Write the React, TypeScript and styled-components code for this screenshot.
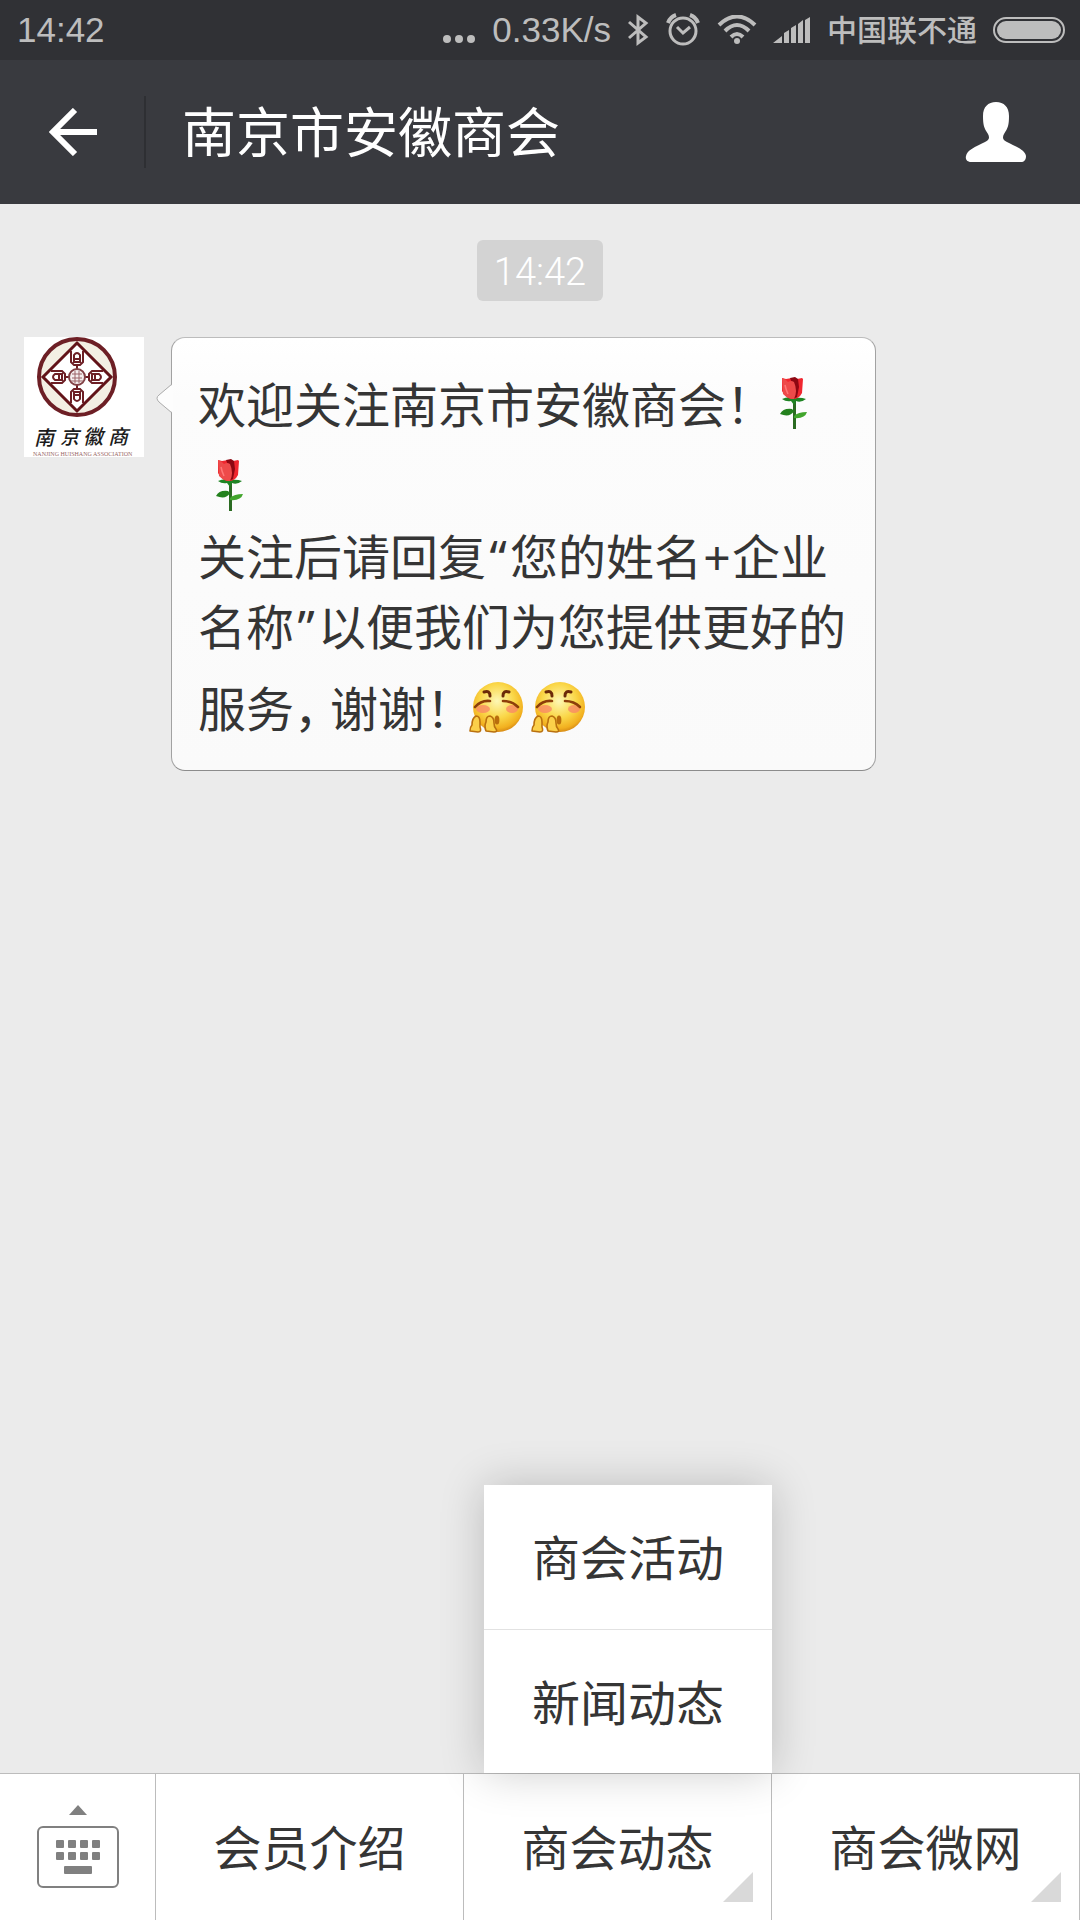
import React from "react";
import styled, { createGlobalStyle } from "styled-components";

const cjk = `"Noto Sans CJK SC", sans-serif`;

const GlobalStyle = createGlobalStyle`
  *, *::before, *::after { box-sizing: border-box; }
  body {
    margin: 0;
    background: #ebebeb;
    color: #353535;
    font-family: ${cjk};
  }
  button { font: inherit; color: inherit; background: none; border: 0; padding: 0; cursor: pointer; }
  svg { display: block; flex: none; }
`;

const Page = styled.div`
  min-height: 100vh;
  display: flex;
  flex-direction: column;
`;

const StatusBar = styled.div`
  height: 60px;
  padding: 0 15px 0 17px;
  display: flex;
  align-items: center;
  justify-content: space-between;
  background: #303135;
  color: #bdbdbd;
  font-family: "Liberation Sans", ${cjk};
  font-size: 35px;
  line-height: 60px;
`;

const StatusItems = styled.div`
  display: flex;
  align-items: center;
  gap: 16px;
`;

const MoreDots = styled.svg`
  margin-top: 18px;
`;

const Carrier = styled.span`
  padding-bottom: 4px;
  font-family: ${cjk};
  font-size: 30px;
  font-weight: 500;
  line-height: 56px;
`;

const Header = styled.header`
  height: 144px;
  display: flex;
  align-items: center;
  background: #393a3f;
  color: #fff;
`;

const BackButton = styled.button`
  width: 146px;
  height: 72px;
  padding-left: 49px;
  border-right: 2px solid #2e2f33;
`;

const Title = styled.h1`
  flex: 1;
  margin: 0;
  padding: 0 0 4px 36px;
  font-size: 54px;
  font-weight: 400;
  line-height: 72px;
`;

const ProfileButton = styled.button`
  padding: 42px 53px;
`;

const Chat = styled.main`
  flex: 1;
  display: flex;
  flex-direction: column;
  padding: 36px 24px;
`;

const TimeStamp = styled.time`
  align-self: center;
  height: 61px;
  padding: 0 17px;
  border-radius: 6px;
  background: #d3d3d3;
  color: #fff;
  font-family: Roboto, sans-serif;
  font-size: 38px;
  font-weight: 300;
  line-height: 64px;
`;

const Message = styled.article`
  display: flex;
  align-items: flex-start;
  gap: 27px;
  margin-top: 36px;
`;

const Bubble = styled.div`
  position: relative;
  max-width: 705px;
  padding: 17px 27px 29px 26px;
  border: 1px solid;
  border-color: #bcbcbc #a2a2a2 #8c8c8c;
  border-radius: 14px;
  background: linear-gradient(#fff, #fcfcfc 14%, #fafafa);
`;

const Tail = styled.svg`
  position: absolute;
  left: -16px;
  top: 45px;
`;

const Text = styled.p`
  margin: 0;
  font-size: 48px;
  line-height: 70px;

  svg { display: inline-block; vertical-align: bottom; }
`;

const Punct = styled.span<{ $w: number; $latin?: boolean }>`
  display: inline-block;
  width: ${(p) => p.$w}px;
  line-height: 48px;
  white-space: nowrap;
  text-align: ${(p) => (p.$latin ? "center" : "left")};
  font-family: ${(p) => (p.$latin ? `"Noto Sans", sans-serif` : cjk)};
`;

const MenuBar = styled.nav`
  height: 147px;
  display: flex;
  border-top: 1px solid #bcbcbc;
  background: #fff;
  font-size: 48px;
`;

const KeyboardButton = styled.button`
  width: 156px;
  padding: 31px 36px;
  border-right: 1px solid #bcbcbc;
`;

const MenuCell = styled.div`
  position: relative;
  flex: 1;
  display: flex;
  border-right: 1px solid #bcbcbc;
`;

const MenuButton = styled.button`
  flex: 1;
  padding-bottom: 4px;
`;

const Corner = styled.span`
  position: absolute;
  right: 18px;
  bottom: 18px;
  width: 30px;
  height: 30px;
  background: #d9d9d9;
  clip-path: polygon(100% 0, 100% 100%, 0 100%);
  pointer-events: none;
`;

const Popup = styled.div`
  position: absolute;
  right: -1px;
  bottom: 100%;
  z-index: 1;
  width: 288px;
  display: flex;
  flex-direction: column;
  margin-bottom: 1px;
  background: #fff;
  box-shadow: 0 0 42px rgba(0, 0, 0, 0.2);
`;

const PopupItem = styled.button`
  height: 144px;
  padding-bottom: 4px;

  & + & { border-top: 1px solid #e2e2e2; }
`;

const Rose = () => (
  <svg width="62" height="82" viewBox="-1 -3 62 82" role="img" aria-label="玫瑰">
    <path d="M30 39h3v32h-3z" fill="#2b6b22" />
    <path d="M19 41q6-3 12-1 7-1 12 1-5 4-10 2l-2 4-3-4q-5 1-9-2z" fill="#1f8424" />
    <path d="M17 56q3-6 12-5l2 2q-4 7-14 3z" fill="#23811d" />
    <path d="M31 58q4-4 13-4-2 7-13 6z" fill="#41a52c" />
    <path d="M19 20l4 1 6-1 5 1 5-1 1 1-1 14q-3 6-9 6t-9-5l-2-3z" fill="#f0262f" />
    <path d="M27 20l5-1 3 2 1 8-2 10-4 2 1-11z" fill="#8d0712" />
    <path d="M19 20q4 1 6 4 3-2 6 0 4 9 0 17-6 0-11-5z" fill="#ee4a4a" />
    <path d="M22 27q1 5 3 9" stroke="#f77" strokeWidth="1.500" fill="none" />
  </svg>
);

const Giggle = () => (
  <svg width="62" height="82" viewBox="-1 -4 62 82" role="img" aria-label="偷笑">
    <defs>
      <radialGradient id="face" cx="0.48" cy="0.38" r="0.62">
        <stop offset="0" stopColor="#fdf7b5" />
        <stop offset="0.55" stopColor="#fad748" />
        <stop offset="0.88" stopColor="#f2b01f" />
        <stop offset="1" stopColor="#d88c16" />
      </radialGradient>
    </defs>
    <circle cx="35" cy="44" r="25" fill="url(#face)" />
    <ellipse cx="20" cy="46" rx="7" ry="4" fill="#f98a66" opacity="0.8" />
    <ellipse cx="49" cy="46" rx="6" ry="4" fill="#f98a66" opacity="0.8" />
    <g fill="none" stroke="#6b2a08" strokeLinecap="round" strokeWidth="3">
      <path d="M21 29q6-2 6 4" />
      <path d="M46 29q-6-2-6 4" />
      <path d="M12 44q6-7 15-6" stroke="#8d3e0a" strokeWidth="2.6" />
      <path d="M40 38q9 0 15 6" stroke="#8d3e0a" strokeWidth="2.6" />
    </g>
    <ellipse cx="34" cy="57" rx="2.4" ry="4.5" fill="#b96d0d" />
    <g fill="#fbd04a" stroke="#b9700f" strokeWidth="1.6" strokeLinejoin="round">
      <path d="M7 68q0-4 2-6 0-7 4-9 4 0 4 6v5q2 5-2 5z" />
      <path d="M23 68q-2-5 0-9 0-6 4-6 4 1 4 7 0 4 2 6 2 3-2 3z" />
    </g>
  </svg>
);

const quarterTurns = [0, 90, 180, 270];

const Avatar = () => (
  <svg width="120" height="120" viewBox="0 0 120 120" role="img" aria-label="南京徽商">
    <rect width="120" height="120" fill="#fff" />
    <circle cx="53" cy="40" r="38" fill="#f3efe3" stroke="#6d1f25" strokeWidth="4" />
    <path d="M53 6L87 40 53 74 19 40z" fill="#fff" stroke="#621318" strokeWidth="3" />
    {quarterTurns.map((turn) => (
      <g key={turn} transform={`rotate(${turn} 53 40)`} fill="none" stroke="#6d1f25">
        <path d="M47 14V25l3 3h6l3-3V14" strokeWidth="2" />
        <path d="M50 25v-7q3-4 6 0v7z" strokeWidth="2" />
        <path d="M50 22h6M53 28v6" strokeWidth="2" />
      </g>
    ))}
    <circle cx="53" cy="40" r="8" fill="#f4eeee" stroke="#814045" strokeWidth="2" />
    <path d="M48 37h10M48 41h10M51 34v12M55 34v12M47 44h12" stroke="#9c6468" fill="none" />
    <g fill="#1b1b1b" fontFamily={cjk} fontWeight="500" fontStyle="italic">
      <text x="10" y="108" fontSize="20">南</text>
      <text x="36" y="107" fontSize="19">京</text>
      <text x="59" y="107" fontSize="20">徽</text>
      <text x="84" y="107" fontSize="20">商</text>
    </g>
    <text x="9" y="119" fontSize="6" fill="#9a6a68" fontFamily="Liberation Serif, serif">
      NANJING HUISHANG ASSOCIATION
    </text>
  </svg>
);

const StatusIcons = () => (
  <>
    <svg width="22" height="32" viewBox="0 0 22 32" fill="none" stroke="#bdbdbd" strokeWidth="3">
      <path d="M2 8l17 15-8 6V3l8 6-17 15" />
    </svg>
    <svg width="36" height="34" viewBox="-1 1 36 34" fill="none" stroke="#bdbdbd" strokeWidth="3">
      <circle cx="17" cy="19" r="13" />
      <path d="M11 15l6 6 7-6" />
      <path d="M2 11q2-6 8-8M32 11q-2-6-8-8" strokeWidth="4" />
    </svg>
    <svg width="40" height="30" viewBox="0 1 40 30" fill="none" stroke="#bdbdbd" strokeWidth="4">
      <path d="M2 11q18-17 36 0M8 17q12-12 24 0M14 23q6-6 12 0" />
      <circle cx="20" cy="27" r="3" fill="#bdbdbd" stroke="none" />
    </svg>
    <svg width="38" height="28" viewBox="0 0 38 28" fill="#bdbdbd">
      <path d="M0 27l9-7v7zM11 17l5-3v13h-5zM18 12l5-3v18h-5zM25 8l5-4v23h-5zM32 4l5-3v26h-5z" />
    </svg>
  </>
);

export default function App() {
  return (
    <Page>
      <GlobalStyle />
      <StatusBar>
        <span>14:42</span>
        <StatusItems>
          <MoreDots width="34" height="10" viewBox="0 0 34 10" fill="#bdbdbd">
            <circle cx="5" cy="5" r="4" />
            <circle cx="17" cy="5" r="4" />
            <circle cx="29" cy="5" r="4" />
          </MoreDots>
          <span>0.33K/s</span>
          <StatusIcons />
          <Carrier>中国联不通</Carrier>
          <svg width="72" height="26" viewBox="0 0 72 26">
            <rect x="1" y="1" width="70" height="24" rx="12" fill="none" stroke="#bdbdbd" strokeWidth="2" />
            <rect x="4" y="4" width="64" height="18" rx="9" fill="#bdbdbd" />
          </svg>
        </StatusItems>
      </StatusBar>

      <Header>
        <BackButton aria-label="返回">
          <svg width="48" height="48" viewBox="0 0 48 48" fill="none" stroke="#fff">
            <path d="M26 2L4 24l22 22" strokeWidth="6" />
            <path d="M5 24h43" strokeWidth="6" />
          </svg>
        </BackButton>
        <Title>南京市安徽商会</Title>
        <ProfileButton aria-label="资料">
          <svg width="62" height="60" viewBox="0 0 62 60" fill="#fff">
            <path d="M31 0C39 0 44 5 44 14c0 9-1 12-5 18-2 4-1 6 3 8 10 5 18 8 19 14 0 4-2 6-5 6H6c-3 0-6-2-5-6 1-6 9-9 19-14 4-2 5-4 3-8-4-6-5-9-5-18C18 5 23 0 31 0z" />
          </svg>
        </ProfileButton>
      </Header>

      <Chat>
        <TimeStamp>14:42</TimeStamp>
        <Message>
          <Avatar />
          <Bubble>
            <Tail width="17" height="32" viewBox="0 0 17 32">
              <path d="M17 1L3 12q-4 3 0 7l14 11z" fill="#fdfdfd" />
              <path d="M16 1L3 12q-4 3 0 7l13 11" fill="none" stroke="#acacac" />
            </Tail>
            <Text>
              欢迎关注南京市安徽商会<Punct $w={36}>！</Punct>
              <Rose />
              <Rose />
              <br />
              关注后请回复<Punct $w={24} $latin>“</Punct>您的姓名
              <Punct $w={30} $latin>+</Punct>
              {"企业"}
              {"名称"}
              <Punct $w={24} $latin>”</Punct>
              {"以便我们为您提供更好的"}
              {"服务"}
              <Punct $w={36}>，</Punct>谢谢<Punct $w={36}>！</Punct>
              <Giggle />
              <Giggle />
            </Text>
          </Bubble>
        </Message>
      </Chat>

      <MenuBar>
        <KeyboardButton aria-label="键盘">
          <svg width="84" height="84" viewBox="0 0 84 84" fill="#808080">
            <path d="M33 10l9-10 9 10z" />
            <rect x="2" y="22" width="80" height="60" rx="5" fill="none" stroke="#808080" strokeWidth="2" />
            {[35, 47].map((y) =>
              [20, 32, 44, 56].map((x) => (
                <rect key={`${x}-${y}`} x={x} y={y} width="8" height="8" rx="1" />
              ))
            )}
            <rect x="28" y="61" width="28" height="8" rx="1" />
          </svg>
        </KeyboardButton>
        <MenuCell>
          <MenuButton>会员介绍</MenuButton>
        </MenuCell>
        <MenuCell>
          <MenuButton>商会动态</MenuButton>
          <Corner />
          <Popup>
            <PopupItem>商会活动</PopupItem>
            <PopupItem>新闻动态</PopupItem>
          </Popup>
        </MenuCell>
        <MenuCell>
          <MenuButton>商会微网</MenuButton>
          <Corner />
        </MenuCell>
      </MenuBar>
    </Page>
  );
}
